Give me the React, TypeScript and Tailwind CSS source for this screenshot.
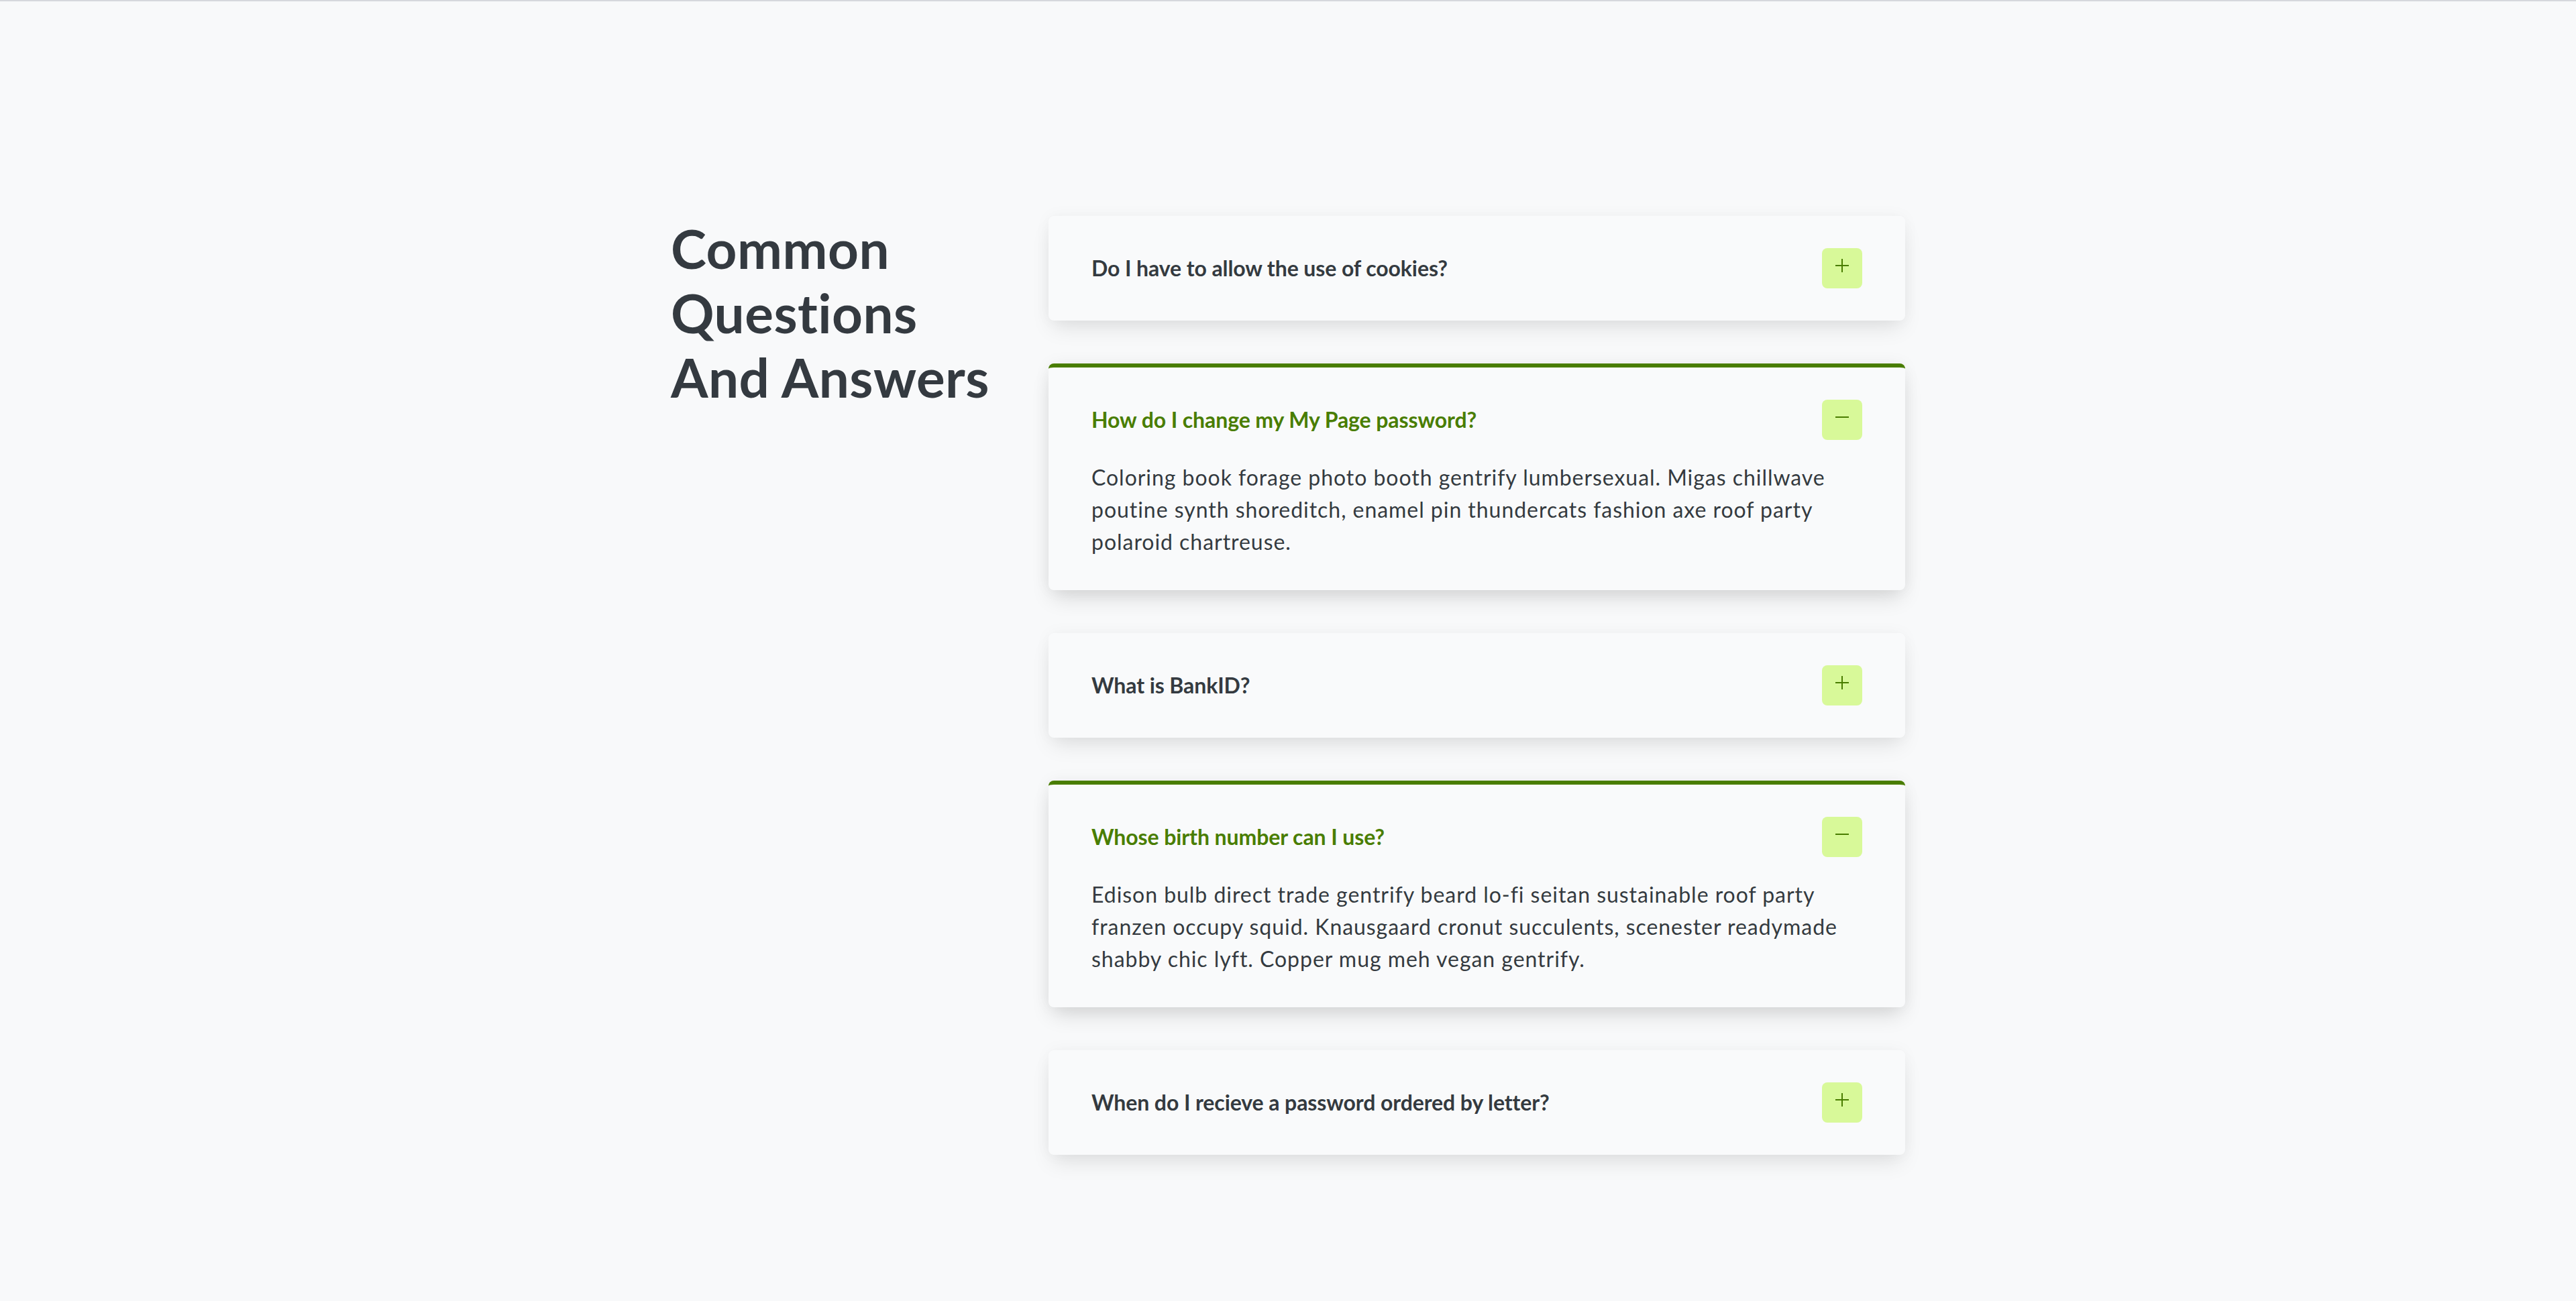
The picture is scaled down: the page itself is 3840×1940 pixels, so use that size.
import { useState } from "react";

type Item = { q: string; a: string };

const items: Item[] = [
    {
        q: "Do I have to allow the use of cookies?",
        a: "Hashtag fixie biodiesel, tumeric kickstarter polaroid small batch. Vinyl cold-pressed fam letterpress banjo selvage.",
    },
    {
        q: "How do I change my My Page password?",
        a: "Coloring book forage photo booth gentrify lumbersexual. Migas chillwave poutine synth shoreditch, enamel pin thundercats fashion axe roof party polaroid chartreuse.",
    },
    {
        q: "What is BankID?",
        a: "Pour-over chambray scenester, distillery meditation tote bag pickled lomo bicycle rights.",
    },
    {
        q: "Whose birth number can I use?",
        a: "Edison bulb direct trade gentrify beard lo-fi seitan sustainable roof party franzen occupy squid. Knausgaard cronut succulents, scenester readymade shabby chic lyft. Copper mug meh vegan gentrify.",
    },
    {
        q: "When do I recieve a password ordered by letter?",
        a: "Kale chips subway tile helvetica, cloud bread keffiyeh tattooed hexagon before they sold out.",
    },
];

function Toggle({ open }: { open: boolean }) {
    return (
        <span className="flex h-[60px] w-[60px] shrink-0 items-start justify-center rounded-lg bg-lime-200 pt-[16px]">
            <svg width="20" height="20" viewBox="0 0 20 20" className="text-lime-700">
                <line x1="0" y1="10" x2="20" y2="10" stroke="currentColor" strokeWidth="2" />
                {!open && <line x1="10" y1="0" x2="10" y2="20" stroke="currentColor" strokeWidth="2" />}
            </svg>
        </span>
    );
}

function Card({ item, open, onToggle }: { item: Item; open: boolean; onToggle: () => void }) {
    return (
        <div
            className={
                open
                    ? "rounded-lg border-t-[6px] border-lime-700 bg-[#f9fafb] px-16 py-12 shadow-[0_16px_32px_-6px_rgba(0,0,0,0.14),0_0_24px_rgba(0,0,0,0.05)]"
                    : "rounded-lg bg-[#f9fafb] px-16 py-12 shadow-[0_16px_32px_-6px_rgba(0,0,0,0.1),0_0_24px_rgba(0,0,0,0.04)]"
            }
        >
            <button onClick={onToggle} className="flex w-full items-center justify-between text-left">
                <span
                    className={
                        open
                            ? "text-[32px] font-bold leading-[48px] tracking-[-0.003em] text-lime-700"
                            : "text-[32px] font-bold leading-[48px] tracking-[-0.003em] text-[#343a40]"
                    }
                >
                    {item.q}
                </span>
                <Toggle open={open} />
            </button>
            {open && (
                <p className="mt-8 pr-8 text-[32px] leading-[48px] tracking-[0.03em] text-[#343a40]">{item.a}</p>
            )}
        </div>
    );
}

export default function App() {
    const [open, setOpen] = useState<number[]>([1, 3]);

    const toggle = (i: number) =>
        setOpen((prev) => (prev.includes(i) ? prev.filter((x) => x !== i) : [...prev, i]));

    return (
        <main className="min-h-screen border-t-2 border-[#d6d8dc] bg-[#f8f9fa] font-['Lato',sans-serif] [font-variant-ligatures:none]">
            <div className="mx-auto flex w-[1840px] pt-[320px] pb-[200px]">
                <div className="w-[563px] shrink-0">
                    <h1 className="w-[500px] text-[80px] font-bold leading-[96px] tracking-[0.006em] text-[#343a40]">
                        Common Questions And Answers
                    </h1>
                </div>
                <div className="flex flex-1 flex-col gap-16">
                    {items.map((item, i) => (
                        <Card key={item.q} item={item} open={open.includes(i)} onToggle={() => toggle(i)} />
                    ))}
                </div>
            </div>
        </main>
    );
}
